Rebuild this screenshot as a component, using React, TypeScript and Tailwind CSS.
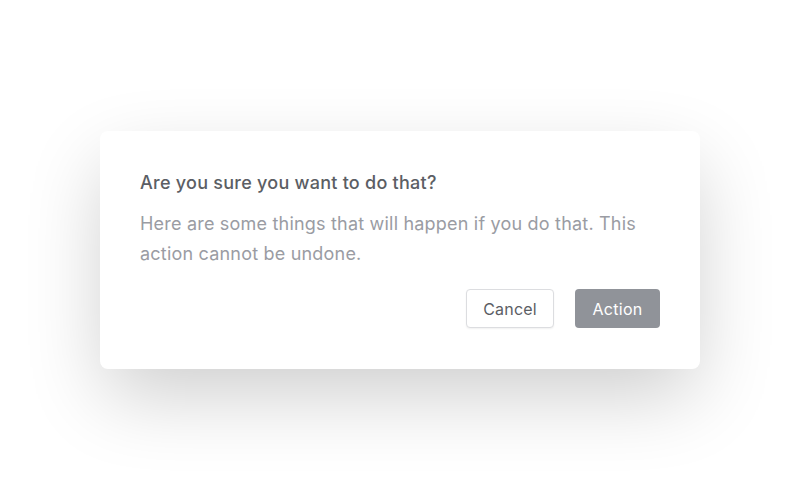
export default function App() {
  return (
    <div
      className="w-[800px] h-[500px] bg-white flex items-center justify-center"
      style={{ fontFamily: 'Inter, "Noto Sans", sans-serif' }}
    >
      <div className="w-[600px] bg-white rounded-lg px-10 pt-[38px] pb-[41px] shadow-[0_30px_80px_-5px_rgba(0,0,0,0.2)] flex flex-col">
        <h2 className="text-[18px] leading-7 font-medium tracking-[0.25px] text-[#5b5e64]">
          Are you sure you want to do that?
        </h2>
        <p className="mt-[12px] text-[18px] leading-[30px] tracking-[0.2px] text-[#9a9ca3]">
          Here are some things that will happen if you do that. This action cannot be undone.
        </p>
        <div className="mt-[20px] flex justify-end gap-[21px]">
          <button className="h-[39px] w-[88px] rounded-[4px] border border-[#dcdde0] bg-white text-[16px] tracking-[0.2px] text-[#5b5e64] shadow-[0_1px_2px_rgba(0,0,0,0.06)]">
            Cancel
          </button>
          <button className="h-[39px] w-[85px] rounded-[4px] bg-[#909399] text-[16px] tracking-[0.3px] text-white">
            Action
          </button>
        </div>
      </div>
    </div>
  );
}
